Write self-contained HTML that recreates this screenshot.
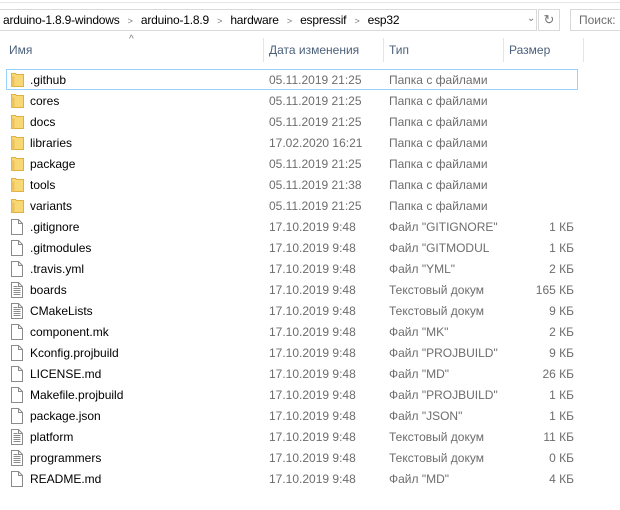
<!DOCTYPE html>
<html><head><meta charset="utf-8"><style>
*{margin:0;padding:0;box-sizing:border-box}
body{width:620px;height:510px;background:#fff;font-family:"Liberation Sans",sans-serif;font-size:12px;position:relative;overflow:hidden;color:#000}
.abs{position:absolute;white-space:nowrap}
.addr{left:-1px;top:9px;width:538px;height:22px;border:1px solid #d9d9d9}
.srch{left:570px;top:9px;width:60px;height:22px;border:1px solid #d9d9d9}
.sep{position:absolute;top:38px;height:24px;width:1px;background:#e5e5e5}
.h{top:43px;color:#4c607a}
.row{position:absolute;left:0;width:620px;height:21px}
.row span{position:absolute;top:4px;white-space:nowrap}
.n{left:30px}
.d{left:269px;color:#6d6d6d}
.t{left:389px;color:#6d6d6d}
.s{right:46px;color:#6d6d6d}
.ic{position:absolute;left:11px;top:3px}
.ar{color:#777;font-size:9px;padding:0 5px}
</style></head><body>
<div class="abs" style="left:0;top:2px;width:620px;height:1px;background:#e5e5e5"></div>
<div class="abs addr"></div>
<div class="abs" style="left:3px;top:13px;color:#000;letter-spacing:-0.2px">arduino-1.8.9-windows <span class="ar">&gt;</span> arduino-1.8.9 <span class="ar">&gt;</span> hardware <span class="ar">&gt;</span> espressif <span class="ar">&gt;</span> esp32</div>
<div class="abs" style="left:527px;top:13px;color:#777;font-size:10px">⌄</div>
<div class="abs" style="left:538px;top:9px;width:22px;height:22px;border:1px solid #d9d9d9;color:#777;text-align:center;line-height:20px;font-size:13px">↻</div>
<div class="abs srch"></div>
<div class="abs" style="left:579px;top:13px;color:#6d6d6d">Поиск:</div>
<div class="abs" style="left:129px;top:34px;color:#777;font-size:10px">^</div>
<div class="sep" style="left:263px"></div><div class="sep" style="left:383px"></div><div class="sep" style="left:503px"></div><div class="sep" style="left:583px"></div>
<div class="abs h" style="left:9px">Имя</div>
<div class="abs h" style="left:269px">Дата изменения</div>
<div class="abs h" style="left:389px">Тип</div>
<div class="abs h" style="left:509px">Размер</div>
<div class="abs" style="left:6px;top:69px;width:572px;height:21px;border:1px solid #99d1ff"></div>
<div id="rows"></div>
<script>
var F='<svg class="ic" width="13" height="15" viewBox="0 0 13 15"><path d="M0.5 1.5h4l1 1h7v12h-12z" fill="#f8d775" stroke="#e0b040"/><path d="M0.5 4.5h3v10h-3z" fill="#eec25a"/></svg>';
var P='<svg class="ic" width="12" height="16" viewBox="0 0 12 16"><path d="M0.5 0.5h7l4 4v11h-11z" fill="#fff" stroke="#8a8a8a"/><path d="M7.5 0.5v4h4" fill="none" stroke="#8a8a8a"/></svg>';
var T='<svg class="ic" width="12" height="16" viewBox="0 0 12 16"><path d="M0.5 0.5h7l4 4v11h-11z" fill="#fff" stroke="#8a8a8a"/><path d="M7.5 0.5v4h4" fill="none" stroke="#8a8a8a"/><path d="M2.5 4.5h4M2.5 6.5h7M2.5 8.5h7M2.5 10.5h7M2.5 12.5h7" stroke="#8a8a8a"/></svg>';
var r=[[F,'.github','05.11.2019 21:25','Папка с файлами',''],[F,'cores','05.11.2019 21:25','Папка с файлами',''],[F,'docs','05.11.2019 21:25','Папка с файлами',''],[F,'libraries','17.02.2020 16:21','Папка с файлами',''],[F,'package','05.11.2019 21:25','Папка с файлами',''],[F,'tools','05.11.2019 21:38','Папка с файлами',''],[F,'variants','05.11.2019 21:25','Папка с файлами',''],
[P,'.gitignore','17.10.2019 9:48','Файл "GITIGNORE"','1 КБ'],[P,'.gitmodules','17.10.2019 9:48','Файл "GITMODUL','1 КБ'],[P,'.travis.yml','17.10.2019 9:48','Файл "YML"','2 КБ'],[T,'boards','17.10.2019 9:48','Текстовый докум','165 КБ'],[T,'CMakeLists','17.10.2019 9:48','Текстовый докум','9 КБ'],[P,'component.mk','17.10.2019 9:48','Файл "MK"','2 КБ'],[P,'Kconfig.projbuild','17.10.2019 9:48','Файл "PROJBUILD"','9 КБ'],[P,'LICENSE.md','17.10.2019 9:48','Файл "MD"','26 КБ'],[P,'Makefile.projbuild','17.10.2019 9:48','Файл "PROJBUILD"','1 КБ'],[P,'package.json','17.10.2019 9:48','Файл "JSON"','1 КБ'],[T,'platform','17.10.2019 9:48','Текстовый докум','11 КБ'],[T,'programmers','17.10.2019 9:48','Текстовый докум','0 КБ'],[P,'README.md','17.10.2019 9:48','Файл "MD"','4 КБ']];
var h='';r.forEach(function(x,i){h+='<div class="row" style="top:'+(69+i*21)+'px">'+x[0]+'<span class="n">'+x[1]+'</span><span class="d">'+x[2]+'</span><span class="t">'+x[3]+'</span><span class="s">'+x[4]+'</span></div>';});
document.getElementById('rows').innerHTML=h;
</script>
</body></html>
